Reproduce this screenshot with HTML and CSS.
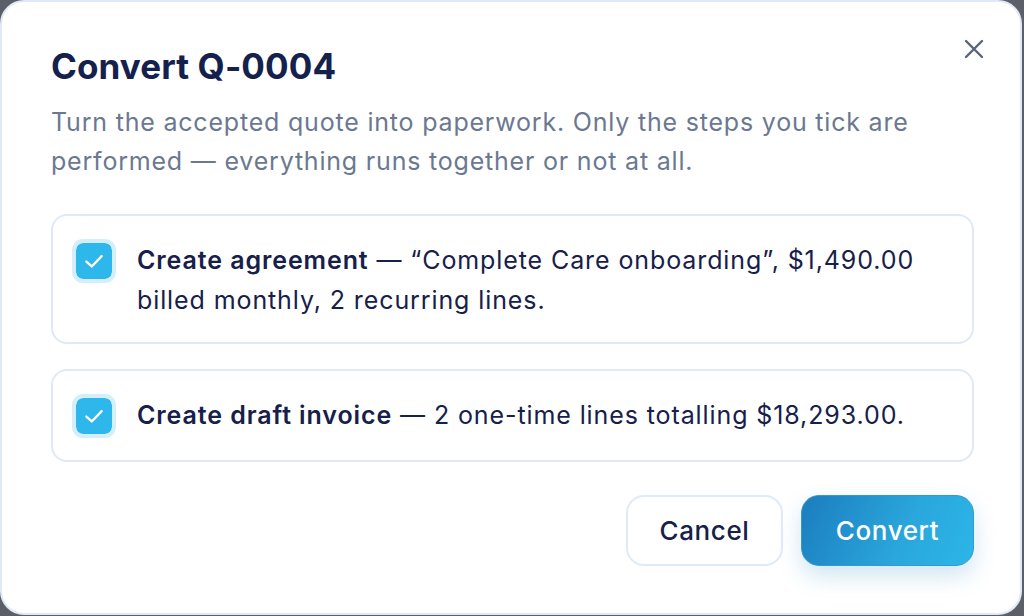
FILE: index.html
```html
<!DOCTYPE html>
<html lang="en">
<head>
<meta charset="utf-8">
<title>Convert Q-0004</title>
<link rel="stylesheet" href="styles.css">
</head>
<body>
<div class="dialog">
  <button class="close" aria-label="Close">
    <svg width="20" height="20" viewBox="0 0 20 20"><path d="M2 2L18 18M18 2L2 18" stroke="#596379" stroke-width="2.4" stroke-linecap="round"/></svg>
  </button>
  <h1 class="title">Convert Q-0004</h1>
  <p class="desc">Turn the accepted quote into paperwork. Only the steps you tick are performed — everything runs together or not at all.</p>
  <div class="options">
    <label class="option">
      <span class="check"><svg width="24" height="24" viewBox="0 0 22 22"><path d="M4 11.5L9 16L18 6.5" fill="none" stroke="#fff" stroke-width="2.1" stroke-linecap="round" stroke-linejoin="round"/></svg></span>
      <span class="text"><b>Create agreement</b> — “Complete Care onboarding”, $1,490.00 billed monthly, 2 recurring lines.</span>
    </label>
    <label class="option">
      <span class="check"><svg width="24" height="24" viewBox="0 0 22 22"><path d="M4 11.5L9 16L18 6.5" fill="none" stroke="#fff" stroke-width="2.1" stroke-linecap="round" stroke-linejoin="round"/></svg></span>
      <span class="text"><b>Create draft invoice</b> — 2 one-time lines totalling $18,293.00.</span>
    </label>
  </div>
  <div class="actions">
    <button class="btn cancel">Cancel</button>
    <button class="btn primary">Convert</button>
  </div>
</div>
</body>
</html>
```

FILE: styles.css
```css
* { box-sizing: border-box; }
html, body { margin: 0; }
body {
  background: #5c5f67;
  width: 1024px;
  height: 616px;
  font-family: "Inter", "Noto Sans", sans-serif;
  color: #16204a;
}
.dialog {
  position: relative;
  width: 1022px;
  height: 615px;
  background: #fff;
  border: 2px solid #dfe9f8;
  border-radius: 24px;
  padding: 40px 46px 0 49px;
}
.close {
  position: absolute;
  top: 35px;
  right: 34px;
  width: 24px;
  height: 24px;
  padding: 2px;
  border: 0;
  background: none;
}
.title {
  margin: 0;
  font-size: 35px;
  font-weight: 650;
  letter-spacing: 0.1px;
  line-height: 48px;
  color: #15214d;
}
.desc {
  margin: 13px 0 0;
  font-size: 25px;
  line-height: 39px;
  color: #6b7891;
  letter-spacing: 0.8px;
}
.options {
  margin-top: 33px;
  display: flex;
  flex-direction: column;
  gap: 25px;
}
.option {
  display: flex;
  align-items: flex-start;
  gap: 21px;
  border: 2px solid #dfe9f8;
  border-radius: 16px;
  padding: 22px 20px 22px 20px;
  min-height: 90px;
}
.check {
  flex: none;
  width: 44px;
  height: 44px;
  border-radius: 11px;
  background: #2db7eb;
  border: 4px solid #d4effb;
  background-clip: padding-box;
  display: flex;
  align-items: center;
  justify-content: center;
  margin-top: 1px;
  margin-left: -1px;
}
.text {
  font-size: 25px;
  line-height: 40px;
  color: #16204a;
  letter-spacing: 0.9px;
  padding-top: 2px;
}
.text b { font-weight: 600; }
.actions {
  margin-top: 33px;
  display: flex;
  justify-content: flex-end;
  gap: 18px;
}
.btn {
  height: 71px;
  border-radius: 18px;
  font-family: inherit;
  font-size: 26px;
  font-weight: 500;
  letter-spacing: 0.6px;
}
.cancel {
  width: 157px;
  background: #fff;
  border: 2px solid #e1eafa;
  color: #16204a;
}
.primary {
  width: 173px;
  border: 1px solid #3a96cf;
  color: #fff;
  background: linear-gradient(115deg, #1b7dbf 0%, #2aa7dc 60%, #2cb6e8 100%);
  box-shadow: 0 10px 22px rgba(40, 140, 200, 0.22);
}
```
